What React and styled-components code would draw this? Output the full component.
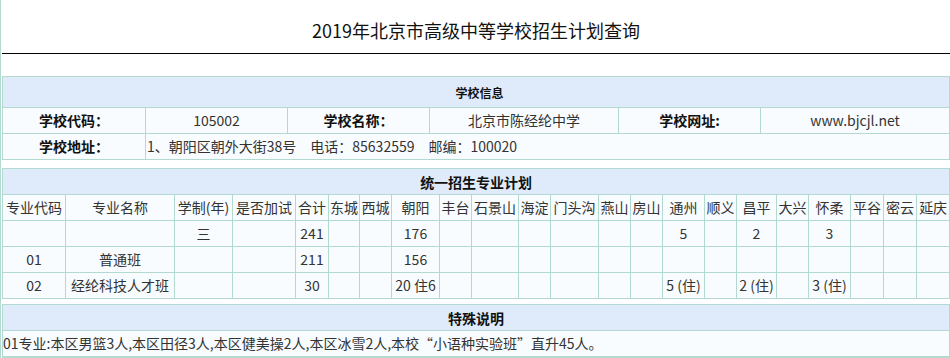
import React from 'react';
import styled, { createGlobalStyle } from 'styled-components';

const line = '#b3dad1';

const GlobalStyle = createGlobalStyle`
  body {
    margin: 0;
    background: #fff;
    font-family: "Noto Sans CJK SC", "Noto Sans", sans-serif;
  }
`;

const Page = styled.div`
  width: 948px;
  min-height: 100vh;
  border-left: 1px solid ${line};
  padding-left: 1px;
`;

const Title = styled.h1`
  margin: 0;
  height: 45px;
  padding-top: 8px;
  line-height: 45px;
  text-align: center;
  font-size: 18px;
  font-weight: normal;
  color: #111;
  border-bottom: 1px solid #000;
`;

const Table = styled.table`
  width: 948px;
  table-layout: fixed;
  border-collapse: separate;
  border-spacing: 0;
  border-top: 1px solid ${line};
  border-left: 1px solid ${line};
  border-bottom: ${(p) => (p.$closed ? `1px solid ${line}` : 'none')};
  margin-top: ${(p) => p.$gap}px;
  font-size: 14px;
`;

const Head = styled.th`
  height: ${(p) => p.$h || 25}px;
  padding: 0 0 0 ${(p) => p.$shift || 0}px;
  border-right: 1px solid ${line};
  border-bottom: 1px solid ${line};
  background: #dfebfb;
  font-size: ${(p) => p.$size || 14}px;
  font-weight: bold;
  color: #111;
  text-align: center;
`;

const Cell = styled.td`
  height: 25px;
  padding: 0 0 0 ${(p) => p.$pad || 0}px;
  border-right: 1px solid ${line};
  border-bottom: 1px solid ${line};
  background: #f8fcff;
  line-height: 25px;
  text-align: ${(p) => p.$align || 'center'};
  font-weight: ${(p) => (p.$bold ? 'bold' : 'normal')};
  color: ${(p) => (p.$bold ? '#111' : '#333')};
  white-space: nowrap;
  overflow: hidden;
`;

const infoCols = [143, 142, 142, 189, 142, 189];
const planCols = [63, 109, 58, 63, 33, 31, 32, 48, 32, 47, 32, 48, 32, 32, 42, 32, 40, 32, 42, 33, 33, 33];

const planHeads = [
  '专业代码', '专业名称', '学制(年)', '是否加试', '合计', '东城', '西城', '朝阳', '丰台', '石景山', '海淀',
  '门头沟', '燕山', '房山', '通州', '顺义', '昌平', '大兴', '怀柔', '平谷', '密云', '延庆',
];

const blank = () => Array(22).fill('');
const planRows = [
  Object.assign(blank(), { 2: '三', 4: '241', 7: '176', 14: '5', 16: '2', 18: '3' }),
  Object.assign(blank(), { 0: '01', 1: '普通班', 4: '211', 7: '156' }),
  Object.assign(blank(), { 0: '02', 1: '经纶科技人才班', 4: '30', 7: '20 住6', 14: '5 (住)', 16: '2 (住)', 18: '3 (住)' }),
];

const Cols = ({ widths }) => (
  <colgroup>
    {widths.map((w, i) => (
      <col key={i} style={{ width: w }} />
    ))}
  </colgroup>
);

export default function App() {
  return (
    <Page>
      <GlobalStyle />
      <Title>2019年北京市高级中等学校招生计划查询</Title>

      <Table $gap={22}>
        <Cols widths={infoCols} />
        <tbody>
          <tr>
            <Head colSpan={6} $h={30} $size={12} $shift={7}>学校信息</Head>
          </tr>
          <tr>
            <Cell $bold>学校代码：</Cell>
            <Cell>105002</Cell>
            <Cell $bold>学校名称：</Cell>
            <Cell>北京市陈经纶中学</Cell>
            <Cell $bold>学校网址:</Cell>
            <Cell>www.bjcjl.net</Cell>
          </tr>
          <tr>
            <Cell $bold>学校地址：</Cell>
            <Cell colSpan={5} $align="left" $pad={1}>
              1、朝阳区朝外大街38号　电话：85632559　邮编：100020
            </Cell>
          </tr>
        </tbody>
      </Table>

      <Table $gap={8}>
        <Cols widths={planCols} />
        <tbody>
          <tr>
            <Head colSpan={22}>统一招生专业计划</Head>
          </tr>
          <tr>
            {planHeads.map((h) => (
              <Cell key={h}>{h}</Cell>
            ))}
          </tr>
          {planRows.map((row, r) => (
            <tr key={r}>
              {row.map((v, i) => (
                <Cell key={i}>{v}</Cell>
              ))}
            </tr>
          ))}
        </tbody>
      </Table>

      <Table $gap={5} $closed>
        <tbody>
          <tr>
            <Head>特殊说明</Head>
          </tr>
          <tr>
            <Cell $align="left">
              01专业:本区男篮3人,本区田径3人,本区健美操2人,本区冰雪2人,本校“小语种实验班”直升45人。
            </Cell>
          </tr>
        </tbody>
      </Table>
    </Page>
  );
}
